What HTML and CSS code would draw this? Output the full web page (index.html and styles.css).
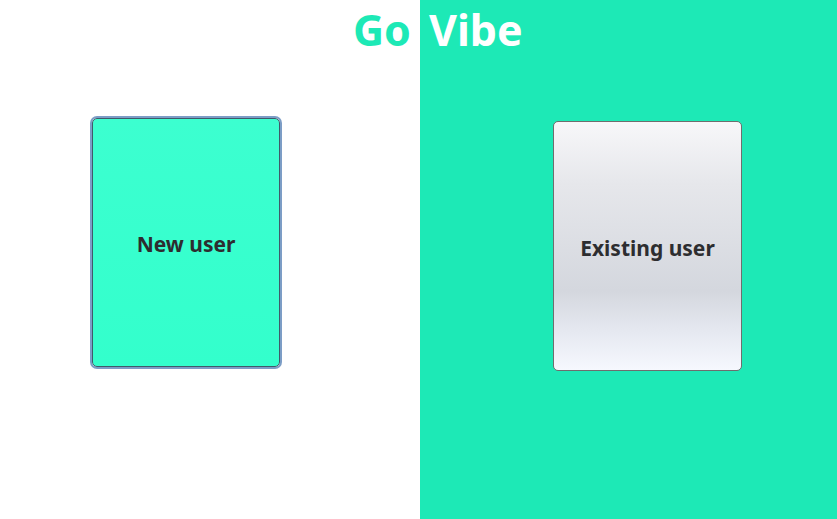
FILE: index.html
```html
<!DOCTYPE html>
<html>
<head>
<meta charset="utf-8">
<link rel="stylesheet" href="styles.css">
<title>Go Vibe</title>
</head>
<body>
<div class="page">
  <section class="half half-left">
    <h1 class="title title-left">Go</h1>
    <div class="slot slot-left">
      <button class="card card-new">New user</button>
    </div>
  </section>
  <section class="half half-right">
    <h1 class="title title-right">Vibe</h1>
    <div class="slot slot-right">
      <button class="card card-existing">Existing user</button>
    </div>
  </section>
</div>
</body>
</html>
```
FILE: styles.css
```css
html, body {
  margin: 0;
  padding: 0;
  height: 100%;
}
body {
  font-family: "Noto Sans", "Open Sans", sans-serif;
}
.page {
  display: grid;
  grid-template-columns: 420px 1fr;
  height: 519px;
}
.half {
  display: flex;
  flex-direction: column;
}
.half-left {
  background: #ffffff;
}
.half-right {
  background: #1de9b6;
}
.title {
  margin: 0;
  height: 60px;
  padding-bottom: 6px;
  font-size: 43px;
  font-weight: 700;
  line-height: 60px;
}
.title-left {
  color: #1de9b6;
  text-align: right;
  padding-right: 9px;
}
.title-right {
  color: #ffffff;
  text-align: left;
  padding-left: 9px;
}
.slot {
  display: flex;
}
.slot-left {
  padding-top: 50px;
  padding-left: 90px;
}
.slot-right {
  padding-top: 55px;
  padding-left: 133px;
}
.card {
  font-family: "Noto Sans", "Open Sans", sans-serif;
  font-size: 21px;
  font-weight: 700;
  color: #2d2d30;
  cursor: pointer;
  padding: 0;
}
.card-new {
  border-radius: 5px;
  border: 1px solid #3f5a6a;
  box-shadow: 0 0 0 2px #7c9dc6;
  background: linear-gradient(#3cffd0, #33ffcc);
  margin: 2px;
  width: 188px;
  height: 249px;
  padding-top: 2px;
}
.card-existing {
  width: 189px;
  height: 250px;
  border-radius: 5px;
  border: 1px solid #6e6e6e;
  background: linear-gradient(#f7f7f9 0%, #e6e7eb 25%, #d4d7de 68%, #e6e9f1 85%, #f6f8fe 100%);
  padding-top: 3px;
}
```
